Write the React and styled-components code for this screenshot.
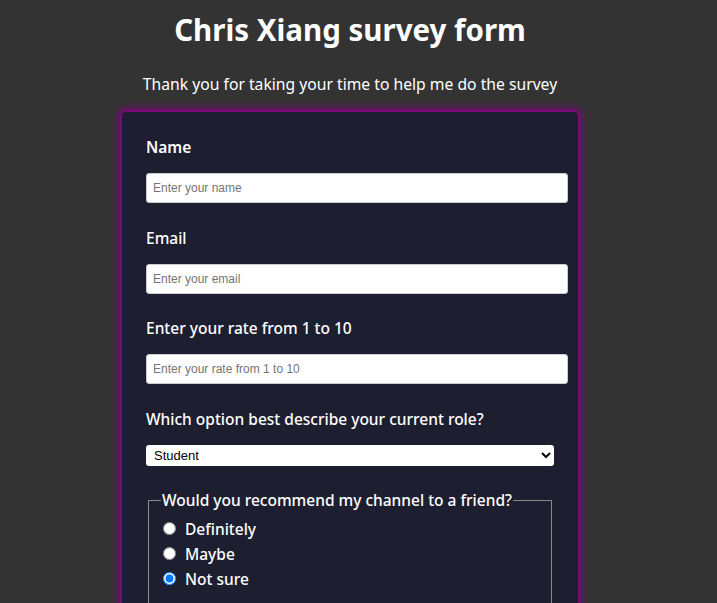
import React from 'react'
import styled, { createGlobalStyle } from 'styled-components'

const GlobalStyle = createGlobalStyle`
  html, body {
    margin: 0;
    padding: 0;
    background: #333333;
    overflow: hidden;
  }
  body {
    font-family: "Noto Sans", "DejaVu Sans", sans-serif;
    color: #ffffff;
  }
`

const roles = ['Student', 'Full time job', 'Full time learner', 'Prefer not to say', 'Other']
const answers = ['Definitely', 'Maybe', 'Not sure']

const App = () => {
  return (
    <>
      <GlobalStyle />
      <Page>
        <Title>Chris Xiang survey form</Title>
        <Description>Thank you for taking your time to help me do the survey</Description>

        <Card>
          <Group>
            <Label htmlFor="name" $strong>Name</Label>
            <TextInput id="name" type="text" placeholder="Enter your name" />
          </Group>

          <Group>
            <Label htmlFor="email">Email</Label>
            <TextInput id="email" type="email" placeholder="Enter your email" />
          </Group>

          <Group>
            <Label htmlFor="number">Enter your rate from 1 to 10</Label>
            <TextInput id="number" type="number" placeholder="Enter your rate from 1 to 10" />
          </Group>

          <Group>
            <Label htmlFor="dropdown">Which option best describe your current role?</Label>
            <Select id="dropdown" defaultValue="Student">
              {roles.map((role) => (
                <option key={role} value={role}>{role}</option>
              ))}
            </Select>
          </Group>

          <Fieldset>
            <Legend>Would you recommend my channel to a friend?</Legend>
            {answers.map((answer) => (
              <RadioRow key={answer}>
                <Radio
                  type="radio"
                  name="recommend"
                  value={answer}
                  defaultChecked={answer === 'Not sure'}
                />
                {answer}
              </RadioRow>
            ))}
          </Fieldset>
        </Card>
      </Page>
    </>
  )
}

export default App

const Page = styled.div`
  width: 700px;
  display: flex;
  flex-direction: column;
  align-items: center;
`

const Title = styled.h1`
  margin: 11px 0 0;
  font-size: 29.5px;
  font-weight: 700;
  line-height: 38px;
`

const Description = styled.p`
  margin: 24px 0 0;
  font-size: 15.7px;
  line-height: 22px;
`

const Card = styled.form`
  width: 456px;
  box-sizing: border-box;
  margin-top: 17px;
  padding: 24px;
  background: #1e1e31;
  border-radius: 4px;
  box-shadow: 0 0 0 2px #7a0a7a, 0 0 8px 3px #800080;
`

const Group = styled.div`
  display: flex;
  flex-direction: column;
  align-items: flex-start;
  margin-bottom: 23.5px;
`

const Label = styled.label`
  font-size: 15.5px;
  line-height: 22px;
  font-weight: ${(p) => (p.$strong ? 600 : 500)};
  margin-bottom: 15px;
`

const TextInput = styled.input`
  width: 100%;
  box-sizing: content-box;
  height: 26px;
  padding: 1px 6px;
  border: 1px solid #cccccc;
  border-radius: 3px;
  background: #ffffff;
  font-family: "Liberation Sans", Arial, sans-serif;
  font-size: 12px;
  color: #222222;
  outline: none;

  &::placeholder {
    color: #757575;
  }
`

const Select = styled.select`
  width: 100%;
  height: 21px;
  border: none;
  border-radius: 3px;
  background: #ffffff;
  font-family: "Liberation Sans", Arial, sans-serif;
  font-size: 13px;
  color: #000000;
  padding: 0 4px;
`

const Fieldset = styled.fieldset`
  margin: 5px 2px 0;
  padding: 5px 12px 40px;
  border: 1px solid #8a8a8a;
`

const Legend = styled.legend`
  font-size: 15.5px;
  line-height: 22px;
  font-weight: 500;
  padding: 0 1px;
`

const RadioRow = styled.label`
  display: flex;
  align-items: center;
  gap: 3px;
  height: 25px;
  font-size: 15.5px;
  font-weight: 500;
`

const Radio = styled.input`
  width: 13px;
  height: 13px;
  margin: 0 6px 0 2px;
  accent-color: #0075ff;
`
